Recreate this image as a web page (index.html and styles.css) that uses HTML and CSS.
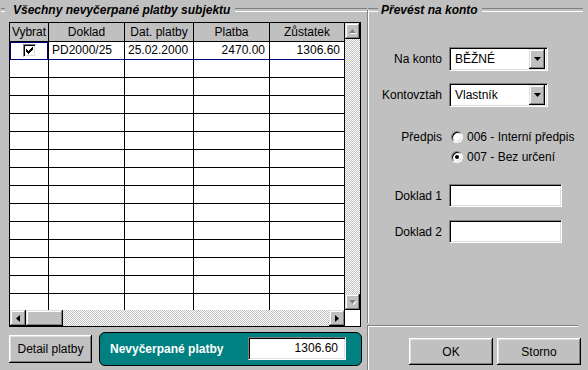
FILE: index.html
```html
<!DOCTYPE html>
<html lang="cs">
<head>
  <meta charset="UTF-8">
  <title>Převod plateb</title>
  <link rel="stylesheet" href="styles.css">
</head>
<body>
  <div class="window">
    <div class="payments">
      <div class="group-title"><span>Všechny nevyčerpané platby subjektu</span></div>
      <div class="grid">
        <div class="grid-body">
          <div class="grid-view">
            <div class="grid-row grid-head">
              <div class="cell">Vybrat</div>
              <div class="cell">Doklad</div>
              <div class="cell">Dat. platby</div>
              <div class="cell">Platba</div>
              <div class="cell">Zůstatek</div>
            </div>
            <div class="grid-row current">
              <div class="cell focus">
                <span class="check">
                  <svg width="7" height="7" viewBox="0 0 7 7"><path d="M0 2h1v1h1v1h1V3h1V2h1V1h1V0h1v3H6v1H5v1H4v1H3v1H2V6H1V5H0z" fill="#000"/></svg>
                </span>
              </div>
              <div class="cell">PD2000/25</div>
              <div class="cell">25.02.2000</div>
              <div class="cell num">2470.00</div>
              <div class="cell num">1306.60</div>
            </div>
            <div class="grid-row"><div class="cell"></div><div class="cell"></div><div class="cell"></div><div class="cell"></div><div class="cell"></div></div>
            <div class="grid-row"><div class="cell"></div><div class="cell"></div><div class="cell"></div><div class="cell"></div><div class="cell"></div></div>
            <div class="grid-row"><div class="cell"></div><div class="cell"></div><div class="cell"></div><div class="cell"></div><div class="cell"></div></div>
            <div class="grid-row"><div class="cell"></div><div class="cell"></div><div class="cell"></div><div class="cell"></div><div class="cell"></div></div>
            <div class="grid-row"><div class="cell"></div><div class="cell"></div><div class="cell"></div><div class="cell"></div><div class="cell"></div></div>
            <div class="grid-row"><div class="cell"></div><div class="cell"></div><div class="cell"></div><div class="cell"></div><div class="cell"></div></div>
            <div class="grid-row"><div class="cell"></div><div class="cell"></div><div class="cell"></div><div class="cell"></div><div class="cell"></div></div>
            <div class="grid-row"><div class="cell"></div><div class="cell"></div><div class="cell"></div><div class="cell"></div><div class="cell"></div></div>
            <div class="grid-row"><div class="cell"></div><div class="cell"></div><div class="cell"></div><div class="cell"></div><div class="cell"></div></div>
            <div class="grid-row"><div class="cell"></div><div class="cell"></div><div class="cell"></div><div class="cell"></div><div class="cell"></div></div>
            <div class="grid-row"><div class="cell"></div><div class="cell"></div><div class="cell"></div><div class="cell"></div><div class="cell"></div></div>
            <div class="grid-row"><div class="cell"></div><div class="cell"></div><div class="cell"></div><div class="cell"></div><div class="cell"></div></div>
            <div class="grid-row"><div class="cell"></div><div class="cell"></div><div class="cell"></div><div class="cell"></div><div class="cell"></div></div>
            <div class="grid-row"><div class="cell"></div><div class="cell"></div><div class="cell"></div><div class="cell"></div><div class="cell"></div></div>
          </div>
          <div class="vscroll">
            <div class="sbtn">
              <svg width="8" height="5" viewBox="0 0 8 5"><path d="M4 1L8 5H1z" fill="#fff"/><path d="M3.5 0L7 4H0z" fill="#808080"/></svg>
            </div>
            <div class="track"></div>
            <div class="sbtn">
              <svg width="8" height="5" viewBox="0 0 8 5"><path d="M1 1H8L4.5 5z" fill="#fff"/><path d="M0 0H7L3.5 4z" fill="#808080"/></svg>
            </div>
          </div>
        </div>
        <div class="grid-foot">
          <div class="hscroll">
            <div class="sbtn">
              <svg width="4" height="7" viewBox="0 0 4 7"><path d="M4 0V7L0 3.5z" fill="#000"/></svg>
            </div>
            <div class="sbtn thumb"></div>
            <div class="track"></div>
            <div class="sbtn">
              <svg width="4" height="7" viewBox="0 0 4 7"><path d="M0 0V7L4 3.5z" fill="#000"/></svg>
            </div>
          </div>
          <div class="corner"></div>
        </div>
      </div>
      <div class="summary">
        <button class="btn detail">Detail platby</button>
        <div class="total">
          <span>Nevyčerpané platby</span>
          <div class="field num">1306.60</div>
        </div>
      </div>
    </div>

    <div class="transfer">
      <div class="group">
        <div class="group-title"><span>Převést na konto</span></div>
        <div class="form-row account">
          <label>Na konto</label>
          <div class="field combo">
            <span>BĚŽNÉ</span>
            <span class="drop"><svg width="7" height="4" viewBox="0 0 7 4"><path d="M0 0H7L3.5 4z" fill="#000"/></svg></span>
          </div>
        </div>
        <div class="form-row relation">
          <label>Kontovztah</label>
          <div class="field combo">
            <span>Vlastník</span>
            <span class="drop"><svg width="7" height="4" viewBox="0 0 7 4"><path d="M0 0H7L3.5 4z" fill="#000"/></svg></span>
          </div>
        </div>
        <div class="form-row entry">
          <label>Předpis</label>
          <div class="radios">
            <div class="radio-row"><span class="radio"></span>006 - Interní předpis</div>
            <div class="radio-row"><span class="radio on"></span>007 - Bez určení</div>
          </div>
        </div>
        <div class="form-row doc1">
          <label>Doklad 1</label>
          <div class="field text"></div>
        </div>
        <div class="form-row doc2">
          <label>Doklad 2</label>
          <div class="field text"></div>
        </div>
      </div>
      <div class="actions">
        <button class="btn">OK</button>
        <button class="btn">Storno</button>
      </div>
    </div>
  </div>
</body>
</html>
```

FILE: styles.css
```css
* { box-sizing: border-box; margin: 0; padding: 0; }
body { background: #c0c0c0; font-family: "Liberation Sans", Arial, sans-serif; font-size: 12px; color: #000; }
.window { display: flex; width: 588px; height: 370px; overflow: hidden; }

/* group frames */
.group-title { display: flex; align-items: center; height: 14px; font-weight: bold; font-style: italic; }
.group-title::before, .group-title::after { content: ""; height: 2px; border-top: 1px solid #808080; border-bottom: 1px solid #fff; }
.group-title::after { flex: 1; }
.payments .group-title { margin-top: 3px; }
.payments .group-title::before { width: 4px; margin-left: 1px; }
.payments .group-title span { padding: 0 5px 0 8px; }
.transfer .group-title { margin-top: -7px; }
.transfer .group-title::before { width: 10px; }
.transfer .group-title span { padding: 0 4px 0 3px; }

/* left side */
.payments { width: 367px; display: flex; flex-direction: column; }
.grid { width: 352px; height: 305px; margin: 5px 0 0 9px; border: 1px solid #000; display: flex; flex-direction: column; }
.grid-body { display: flex; height: 287px; }
.grid-view { width: 335px; overflow: hidden; background: #fff; }
.grid-row { display: grid; grid-template-columns: 39px 76px 69px 76px 75px; height: 18px; }
.cell { border-right: 1px solid #000; border-bottom: 1px solid #000; line-height: 17px; padding: 0 3px; white-space: nowrap; overflow: hidden; }
.cell.num { text-align: right; padding-right: 4px; }
.grid-head { height: 19px; background: #c0c0c0; }
.grid-head .cell { text-align: center; line-height: 18px; padding: 0 1px; }
.grid-row.current .cell { border-bottom-color: #000080; }
.cell.focus { box-shadow: inset 1px 1px 0 #000080, inset -1px 0 0 #000080; display: flex; justify-content: center; align-items: center; }
.check { width: 13px; height: 13px; background: #fff; border: 1px solid; border-color: #808080 #fff #fff #808080; box-shadow: inset 1px 1px 0 #000, inset -1px -1px 0 #dfdfdf; display: flex; justify-content: center; align-items: center; }

.sbtn { background: #c0c0c0; display: flex; justify-content: center; align-items: center; box-shadow: inset -1px -1px 0 #000, inset 1px 1px 0 #dfdfdf, inset -2px -2px 0 #808080, inset 2px 2px 0 #fff; }
.track { flex: 1; background-image: repeating-conic-gradient(#c0c0c0 0 25%, #fff 0 50%); background-size: 2px 2px; }
.vscroll { width: 15px; display: flex; flex-direction: column; }
.vscroll .sbtn { height: 16px; }
.grid-foot { display: flex; height: 16px; }
.hscroll { width: 335px; display: flex; }
.hscroll .sbtn { width: 16px; }
.hscroll .thumb { width: 37px; }
.corner { flex: 1; background: #fff; }

.summary { flex: 1; display: flex; align-items: center; gap: 7px; padding-left: 9px; }
.btn { background: #c0c0c0; border: none; font: inherit; color: #000; width: 84px; height: 27px; box-shadow: inset -1px -1px 0 #000, inset 1px 1px 0 #fff, inset -2px -2px 0 #808080, inset 2px 2px 0 #dfdfdf; }
.btn.detail { width: 83px; height: 28px; }
.total { width: 263px; height: 34px; background: #008080; border: 1px solid #000; border-radius: 6px; display: flex; align-items: center; justify-content: space-between; padding: 0 15px 0 10px; color: #fff; font-weight: bold; }
.field { background: #fff; border: 1px solid; border-color: #808080 #fff #fff #808080; box-shadow: inset 1px 1px 0 #000, inset -1px -1px 0 #dfdfdf; color: #000; font-weight: normal; }
.field.num { text-align: right; }
.total .field { width: 98px; height: 23px; line-height: 21px; padding: 0 7px; }

/* right side */
.transfer { flex: 1; display: flex; flex-direction: column; }
.group { height: 313px; margin: 10px 5px 0 0; border-left: 1px solid #808080; box-shadow: inset 1px 0 0 #fff; }
.form-row { display: flex; align-items: center; }
.form-row label { width: 74px; margin-right: 7px; text-align: right; }
.account { margin-top: 30px; }
.relation { margin-top: 12px; }
.entry { margin-top: 20px; align-items: flex-start; }
.entry label { line-height: 20px; }
.doc1 { margin-top: 17px; }
.doc2 { margin-top: 13px; }
.combo { width: 99px; height: 24px; display: flex; align-items: center; justify-content: space-between; padding: 0 2px 0 5px; }
.drop { width: 16px; height: 20px; background: #c0c0c0; display: flex; justify-content: center; align-items: center; box-shadow: inset -1px -1px 0 #000, inset 1px 1px 0 #dfdfdf, inset -2px -2px 0 #808080, inset 2px 2px 0 #fff; }
.field.text { width: 113px; height: 23px; }
.radio-row { display: flex; align-items: center; height: 20px; gap: 4px; }
.radio { width: 12px; height: 12px; margin-left: 2px; border-radius: 50%; background: #fff; border: 1px solid; border-color: #808080 #fff #fff #808080; box-shadow: inset 1px 1px 0 #000, inset -1px -1px 0 #dfdfdf; display: flex; justify-content: center; align-items: center; }
.radio.on::after { content: ""; width: 4px; height: 4px; border-radius: 50%; background: #000; }

.actions { flex: 1; margin: 2px 10px 0 0; border-top: 1px solid #808080; border-left: 1px solid #808080; box-shadow: inset 1px 1px 0 #fff; display: flex; justify-content: flex-end; align-items: flex-start; gap: 4px; padding-top: 12px; }
.actions .btn:last-child { margin-right: -3px; }
```
